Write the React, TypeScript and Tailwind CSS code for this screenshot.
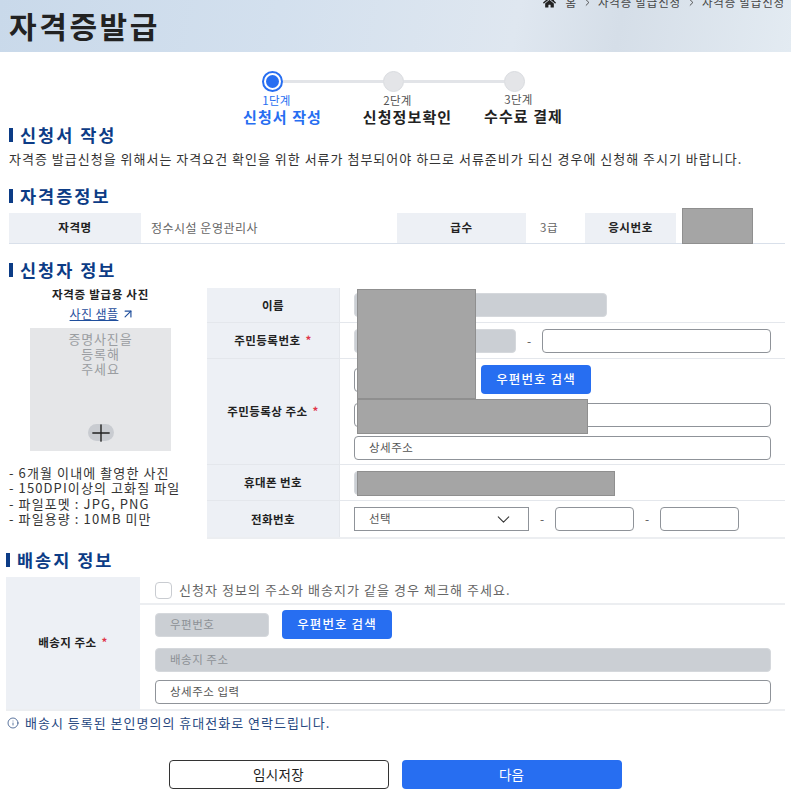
import { ChevronDown, Info, Plus, ArrowUpRight, ChevronRight } from "lucide-react";
import { FaHome } from "react-icons/fa";
import type { ReactNode } from "react";

const H = ({ children, cls = "" }: { children: ReactNode; cls?: string }) => (
  <h2 className={`flex items-center gap-[7px] text-[17.5px] leading-[20px] font-bold tracking-[2px] text-[#0c3c86] ${cls}`}>
    <span className="block w-[4px] h-[14px] bg-[#0c3c86]" />
    {children}
  </h2>
);

const Th = ({ children, star }: { children: ReactNode; star?: boolean }) => (
  <div className="w-[133px] shrink-0 bg-[#edf0f5] border-r border-[#e4e7ec] flex items-center justify-center pt-[1px] text-[11.5px] font-bold text-[#222] tracking-[0.45px]">
    {children}
    {star && <span className="ml-[5px] text-[#e0364a]">*</span>}
  </div>
);

const Field = ({ w, disabled, text, grow }: { w?: string; disabled?: boolean; text?: string; grow?: boolean }) => (
  <div
    className={`h-[24px] rounded-[4px] border flex items-center px-[14px] text-[11.5px] tracking-[0.5px] ${
      disabled ? "bg-[#cbcfd4] border-[#d5d8dc] text-[#8d9196]" : "bg-white border-[#8f9399] text-[#555]"
    } ${grow ? "flex-1" : ""} ${w ?? ""}`}
  >
    {text}
  </div>
);

const Redact = ({ cls }: { cls: string }) => (
  <div className={`absolute bg-[#a5a5a5] border border-[#8f8f8f] ${cls}`} />
);

const Blue = () => (
  <button className="w-[110px] h-[29px] rounded-[4px] bg-[#276ef1] text-white text-[12.5px] font-medium tracking-[1.1px]">
    우편번호 검색
  </button>
);

const Step = ({ n, t, active, cls = "", tcls = "pl-[12px]" }: { n: string; t: string; active?: boolean; cls?: string; tcls?: string }) => (
  <div className={`w-[121px] flex flex-col items-center ${cls}`}>
    <span className={`text-[11.5px] leading-[14px] tracking-[0.3px] ${active ? "text-[#276ef1]" : "text-[#555]"}`}>{n}</span>
    <span className={`mt-[1px] text-[15px] leading-[18px] font-bold tracking-[1.1px] whitespace-nowrap ${tcls} ${active ? "text-[#276ef1]" : "text-[#222]"}`}>{t}</span>
  </div>
);

export default function App() {
  return (
    <div className="w-[791px] h-[794px] overflow-hidden bg-white relative text-[#333] font-['Noto_Sans_CJK_KR','Noto_Sans',sans-serif]">
      <header className="relative h-[52px] overflow-hidden bg-[linear-gradient(100deg,#c9d9ea_0%,#d3e0ee_35%,#dfe7f0_65%,#d5dee8_78%,#e3ebf2_100%)] pl-[9px] pt-[6px]">
        <h1 className="text-[30px] leading-[38px] font-bold text-[#222] tracking-[2.6px]">자격증발급</h1>
        <div className="absolute right-[6px] top-[-5px] flex items-center gap-[5px] text-[11.5px] leading-[14px] text-[#444] tracking-[0.8px]">
          <FaHome size={13} className="text-[#222] mr-[5px]" />
          <span>홈</span>
          <ChevronRight size={11} />
          <span>자격증 발급신청</span>
          <ChevronRight size={11} />
          <span>자격증 발급신청</span>
        </div>
      </header>

      <section className="pt-[19px] flex flex-col items-center">
        <div className="flex items-center w-[263px] -ml-[5px]">
          <span className="w-[21px] h-[21px] rounded-full bg-white border-[2px] border-[#276ef1] flex items-center justify-center shrink-0">
            <span className="w-[13px] h-[13px] rounded-full bg-[#276ef1]" />
          </span>
          <span className="w-[100px] h-[3px] bg-[#e2e4e8]" />
          <span className="w-[21px] h-[21px] rounded-full bg-[#e4e5e8] border border-[#d9dbdf] shrink-0" />
          <span className="w-[100px] h-[3px] bg-[#e2e4e8]" />
          <span className="w-[21px] h-[21px] rounded-full bg-[#e4e5e8] border border-[#d9dbdf] shrink-0" />
        </div>
        <div className="flex mt-[1px] ml-[4px]">
          <Step n="1단계" t="신청서 작성" active />
          <Step n="2단계" t="신청정보확인" tcls="pl-[20px]" />
          <Step n="3단계" t="수수료 결제" cls="-mt-[1px]" tcls="pl-[10px]" />
        </div>
      </section>

      <div className="pl-[9px] pr-[6px]">
        <H cls="-mt-[1px]">신청서 작성</H>
        <p className="mt-[5px] text-[13px] leading-[18px] text-[#333] tracking-[1px] whitespace-nowrap">
          자격증 발급신청을 위해서는 자격요건 확인을 위한 서류가 첨부되어야 하므로 서류준비가 되신 경우에 신청해 주시기 바랍니다.
        </p>

        <H cls="mt-[18px]">자격증정보</H>
        <div className="relative mt-[7px] flex h-[31px] border-b border-[#d9e0ea] text-[11.5px] tracking-[0.6px]">
          <div className="w-[132px] bg-[#edf0f5] flex items-center justify-center font-bold text-[#222]">자격명</div>
          <div className="w-[256px] flex items-center pl-[10px] text-[#666] text-[12px] tracking-[0.5px]">정수시설 운영관리사</div>
          <div className="w-[129px] bg-[#edf0f5] flex items-center justify-center font-bold text-[#222]">급수</div>
          <div className="w-[59px] flex items-center pl-[14px] text-[#666]">3급</div>
          <div className="w-[91px] bg-[#edf0f5] flex items-center justify-center font-bold text-[#222]">응시번호</div>
          <Redact cls="left-[673px] top-[-5px] w-[71px] h-[36px]" />
        </div>

        <H cls="mt-[16px]">신청자 정보</H>

        <div className="flex mt-[8px]">
          <aside className="w-[198px] shrink-0">
            <div className="w-[183px] flex flex-col items-center">
              <div className="text-[11.5px] leading-[14px] font-bold text-[#222] tracking-[0.7px] -mt-[1px]">자격증 발급용 사진</div>
              <div className="mt-[6px] ml-[4px] flex items-center gap-[3px] text-[12px] leading-[14px] tracking-[0.4px] text-[#1f4e9c]">
                <span className="underline">사진 샘플</span>
                <ArrowUpRight size={14} />
              </div>
              <div className="mt-[7px] w-[141px] h-[123px] bg-[#e5e6e8] flex flex-col items-center pt-[3px] text-[13px] leading-[15px] tracking-[0.8px] text-[#9a9da1]">
                <span>증명사진을</span>
                <span>등록해</span>
                <span>주세요</span>
                <span className="mt-auto mb-[10px] w-[26px] h-[17px] rounded-full bg-[#c9ccd1] flex items-center justify-center text-[#222] overflow-visible">
                  <Plus size={28} strokeWidth={1.2} className="shrink-0" />
                </span>
              </div>
            </div>
            <ul className="mt-[14px] text-[13px] leading-[15.3px] text-[#333] tracking-[1.1px] whitespace-nowrap">
              <li>- 6개월 이내에 촬영한 사진</li>
              <li>- 150DPI이상의 고화질 파일</li>
              <li>- 파일포멧 : JPG, PNG</li>
              <li>- 파일용량 : 10MB 미만</li>
            </ul>
          </aside>

          <div className="relative flex-1 border-b-[2px] border-[#eceef1]">
            <div className="flex h-[35px] border-b border-[#e4e7ec]">
              <Th>이름</Th>
              <div className="flex-1 flex items-center pl-[14px]"><Field disabled w="w-[253px]" /></div>
            </div>
            <div className="flex h-[36px] border-b border-[#e4e7ec]">
              <Th star>주민등록번호</Th>
              <div className="flex-1 flex items-center pl-[14px]">
                <Field disabled w="w-[162px]" />
                <span className="w-[26px] text-center text-[12px] text-[#555]">-</span>
                <Field w="w-[229px]" />
              </div>
            </div>
            <div className="flex h-[106px] border-b border-[#e4e7ec]">
              <Th star>주민등록상 주소</Th>
              <div className="flex-1 flex flex-col pl-[14px] pr-[14px] pt-[6px]">
                <div className="flex items-center gap-[6px]">
                  <Field w="w-[121px]" />
                  <Blue />
                </div>
                <div className="mt-[9px] flex"><Field grow /></div>
                <div className="mt-[9px] flex"><Field grow text="상세주소" /></div>
              </div>
            </div>
            <div className="flex h-[36px] border-b border-[#e4e7ec]">
              <Th>휴대폰 번호</Th>
              <div className="flex-1 flex items-center pl-[14px]"><Field disabled w="w-[260px]" /></div>
            </div>
            <div className="flex h-[36px]">
              <Th>전화번호</Th>
              <div className="flex-1 flex items-center pl-[14px]">
                <div className="w-[175px] h-[24px] border border-[#8f9399] bg-white flex items-center justify-between pl-[14px] pr-[14px] text-[11.5px] tracking-[0.5px] text-[#555]">
                  선택
                  <ChevronDown size={21} strokeWidth={1.2} className="text-[#333]" />
                </div>
                <span className="w-[26px] text-center text-[12px] text-[#555]">-</span>
                <Field w="w-[79px]" />
                <span className="w-[26px] text-center text-[12px] text-[#555]">-</span>
                <Field w="w-[79px]" />
              </div>
            </div>
            <Redact cls="left-[150px] top-[1px] w-[119px] h-[110px]" />
            <Redact cls="left-[150px] top-[111px] w-[231px] h-[35px]" />
            <Redact cls="left-[150px] top-[183px] w-[258px] h-[25px]" />
          </div>
        </div>
      </div>

      <div className="pl-[6px] pr-[6px] mt-[11px]">
        <H>배송지 정보</H>
        <div className="mt-[7px] flex h-[134px] border-b-[2px] border-[#eceef1]">
          <div className="w-[134px] shrink-0 bg-[#edf0f5] flex items-center justify-center text-[11.5px] tracking-[0.45px] font-bold text-[#222]">
            배송지 주소<span className="ml-[5px] text-[#e0364a]">*</span>
          </div>
          <div className="flex-1 flex flex-col">
            <div className="h-[28px] shrink-0 border-b-[2px] border-[#eceef1] flex items-center pl-[15px] text-[13px] text-[#666] tracking-[1.05px]">
              <span className="w-[17px] h-[17px] rounded-[4px] border border-[#c9ccd1] mr-[7px]" />
              신청자 정보의 주소와 배송지가 같을 경우 체크해 주세요.
            </div>
            <div className="pl-[15px] pr-[14px] pt-[5px] flex flex-col">
              <div className="flex items-center gap-[13px]">
                <Field disabled w="w-[114px]" text="우편번호" />
                <Blue />
              </div>
              <div className="mt-[9px] flex"><Field disabled grow text="배송지 주소" /></div>
              <div className="mt-[8px] flex"><Field grow text="상세주소 입력" /></div>
            </div>
          </div>
        </div>
        <p className="mt-[4px] flex items-center gap-[6px] text-[13px] leading-[16px] text-[#27487f] tracking-[1px]">
          <Info size={12} strokeWidth={1.5} className="ml-[1px]" />
          배송시 등록된 본인명의의 휴대전화로 연락드립니다.
        </p>
      </div>

      <div className="mt-[29px] flex justify-center gap-[13px] -ml-[1px]">
        <button className="w-[220px] h-[29px] rounded-[4px] bg-white border border-[#333] text-[13.5px] tracking-[0.3px] text-[#222]">임시저장</button>
        <button className="w-[220px] h-[29px] rounded-[4px] bg-[#276ef1] text-[13.5px] text-white">다음</button>
      </div>
    </div>
  );
}
